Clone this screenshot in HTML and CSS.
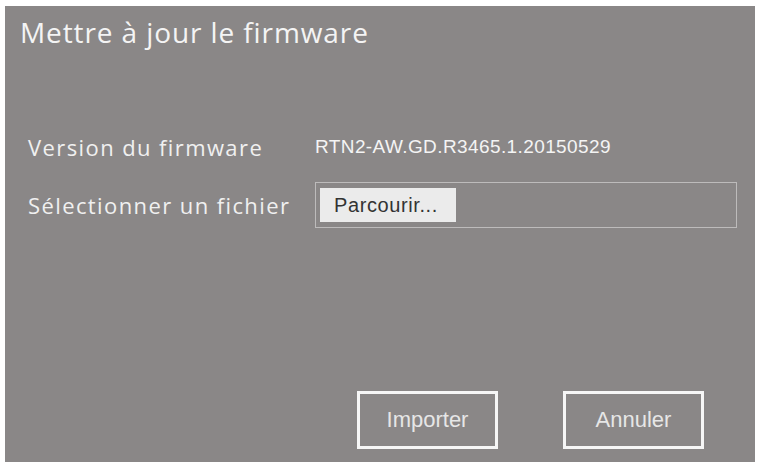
FILE: index.html
```html
<!DOCTYPE html>
<html lang="fr">
  <head>
    <meta charset="utf-8" />
    <title>Mettre à jour le firmware</title>
    <link rel="stylesheet" href="styles.css">
  </head>
  <body>
    <form class="fw-dialog">
      <h1 class="fw-title">Mettre à jour le firmware</h1>

      <div class="fw-fields">
        <div class="fw-row">
          <span class="fw-label">Version du firmware</span>
          <span class="fw-value">RTN2-AW.GD.R3465.1.20150529</span>
        </div>
        <div class="fw-row">
          <span class="fw-label">Sélectionner un fichier</span>
          <div class="fw-file">
            <span class="fw-browse">Parcourir...</span>
          </div>
        </div>
      </div>

      <div class="fw-actions">
        <button type="button" class="fw-btn">Importer</button>
        <button type="button" class="fw-btn">Annuler</button>
      </div>
    </form>
  </body>
</html>
```

FILE: styles.css
```css
/* Firmware update dialog */
body {
  margin: 0;
  background: #fff;
  font-family: "Open Sans", sans-serif;
}

.fw-dialog {
  margin: 6px 7px 0 5px;
  height: 456px;
  background: #8a8787;
  box-sizing: border-box;
  padding: 8px 0 0 0;
  display: flex;
  flex-direction: column;
}

.fw-title {
  margin: 0 0 0 15px;
  font-size: 28px;
  font-weight: 400;
  letter-spacing: 0.9px;
  line-height: 36px;
  color: #f4f4f4;
}

.fw-fields {
  margin: 74px 0 0 23px;
  display: flex;
  flex-direction: column;
  gap: 12px;
}

.fw-row {
  display: flex;
  align-items: center;
  height: 46px;
}

.fw-label {
  width: 287px;
  font-size: 22px;
  letter-spacing: 1.4px;
  color: #f0f0f0;
}

.fw-value {
  font-family: "Liberation Sans", sans-serif;
  font-size: 19px;
  letter-spacing: 0.4px;
  color: #f4f4f4;
}

.fw-file {
  width: 422px;
  height: 46px;
  border: 1px solid #bdbbbb;
  box-sizing: border-box;
  padding: 5px 4px;
  display: flex;
}

.fw-browse {
  width: 136px;
  background: #ebebeb;
  color: #333;
  font-family: "Liberation Sans", sans-serif;
  font-size: 20px;
  letter-spacing: 0.6px;
  display: flex;
  align-items: center;
  padding-left: 14px;
  box-sizing: border-box;
}

.fw-actions {
  margin: auto 0 13px 352px;
  display: flex;
  gap: 65px;
}

.fw-btn {
  width: 141px;
  height: 58px;
  background: transparent;
  border: 3px solid #f6f6f6;
  color: #e6e6e6;
  font-family: "Liberation Sans", sans-serif;
  font-size: 22px;
  padding: 0;
  cursor: pointer;
}
```
